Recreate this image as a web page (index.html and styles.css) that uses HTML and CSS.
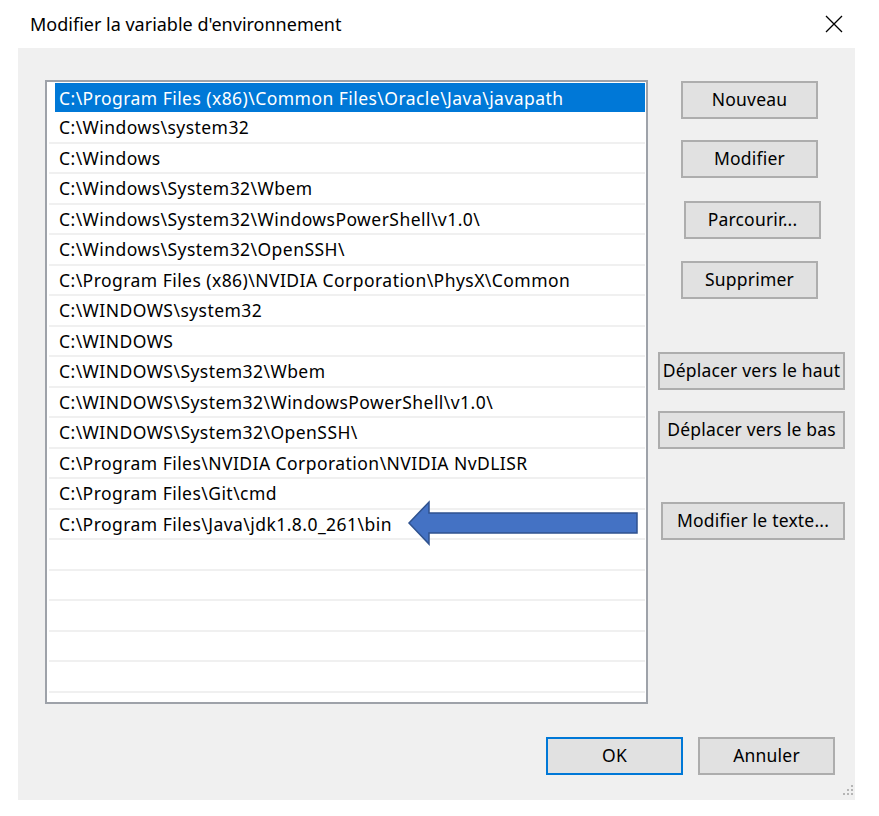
FILE: index.html
```html
<!DOCTYPE html>
<html lang="fr">
<head>
<meta charset="utf-8">
<title>Modifier la variable d'environnement</title>
<link rel="stylesheet" href="styles.css">
</head>
<body>
<div class="titlebar">
  <span class="title">Modifier la variable d'environnement</span>
  <svg class="close" width="18" height="18" viewBox="0 0 18 18"><path d="M1 1 L17 17 M17 1 L1 17" stroke="#000" stroke-width="1.3" fill="none"/></svg>
</div>
<div class="panel">
  <div class="main">
    <div class="list">
      <div class="row sel"><span>C:\Program Files (x86)\Common Files\Oracle\Java\javapath</span></div>
      <div class="row"><span>C:\Windows\system32</span></div>
      <div class="row"><span>C:\Windows</span></div>
      <div class="row"><span>C:\Windows\System32\Wbem</span></div>
      <div class="row"><span>C:\Windows\System32\WindowsPowerShell\v1.0\</span></div>
      <div class="row"><span>C:\Windows\System32\OpenSSH\</span></div>
      <div class="row"><span>C:\Program Files (x86)\NVIDIA Corporation\PhysX\Common</span></div>
      <div class="row"><span>C:\WINDOWS\system32</span></div>
      <div class="row"><span>C:\WINDOWS</span></div>
      <div class="row"><span>C:\WINDOWS\System32\Wbem</span></div>
      <div class="row"><span>C:\WINDOWS\System32\WindowsPowerShell\v1.0\</span></div>
      <div class="row"><span>C:\WINDOWS\System32\OpenSSH\</span></div>
      <div class="row"><span>C:\Program Files\NVIDIA Corporation\NVIDIA NvDLISR</span></div>
      <div class="row"><span>C:\Program Files\Git\cmd</span></div>
      <div class="row"><span>C:\Program Files\Java\jdk1.8.0_261\bin</span></div>
      <div class="row"><span></span></div>
      <div class="row"><span></span></div>
      <div class="row"><span></span></div>
      <div class="row"><span></span></div>
      <div class="row"><span></span></div>
      <svg class="arrow" width="234" height="48" viewBox="0 0 234 48"><polygon points="2,23 22,2 22,13 230,13 230,33 22,33 22,44" fill="#4472c4" stroke="#2f528f" stroke-width="1.5" stroke-linejoin="miter"/></svg>
    </div>
    <div class="buttons">
      <button class="btn b-nouveau">Nouveau</button>
      <button class="btn b-modifier">Modifier</button>
      <button class="btn b-parcourir">Parcourir...</button>
      <button class="btn b-supprimer">Supprimer</button>
      <button class="btn b-haut">Déplacer vers le haut</button>
      <button class="btn b-bas">Déplacer vers le bas</button>
      <button class="btn b-texte">Modifier le texte...</button>
    </div>
  </div>
  <div class="footer">
    <button class="btn b-ok">OK</button>
    <button class="btn b-annuler">Annuler</button>
  </div>
  <svg class="grip" width="12" height="12" viewBox="0 0 12 12">
    <rect x="10" y="0" width="2" height="2" fill="#b5b5b5"/>
    <rect x="6" y="4" width="2" height="2" fill="#b5b5b5"/>
    <rect x="10" y="4" width="2" height="2" fill="#b5b5b5"/>
    <rect x="2" y="8" width="2" height="2" fill="#b5b5b5"/>
    <rect x="6" y="8" width="2" height="2" fill="#b5b5b5"/>
    <rect x="10" y="8" width="2" height="2" fill="#b5b5b5"/>
  </svg>
</div>
</body>
</html>
```
FILE: styles.css
```css
html, body {
  margin: 0;
  padding: 0;
  background: #ffffff;
}
body {
  width: 879px;
  height: 816px;
  font-family: "Noto Sans", "Open Sans", sans-serif;
  color: #000;
}
.titlebar {
  height: 48px;
  display: flex;
  align-items: center;
  justify-content: space-between;
  padding: 0 36px 0 30px;
}
.title {
  font-size: 18px;
  color: #000;
}
.close {
  display: block;
}
.panel {
  position: relative;
  margin: 0 24px 0 18px;
  height: 752px;
  background: #f0f0f0;
  display: flex;
  flex-direction: column;
}
.main {
  display: flex;
  padding: 32px 0 0 27px;
}
.list {
  position: relative;
  width: 603px;
  height: 624px;
  box-sizing: border-box;
  border: 2px solid #9ea2a9;
  background: #fff;
  padding: 1px 1px 0 2px;
  overflow: hidden;
}
.row {
  height: 30.5px;
  box-sizing: border-box;
  border-bottom: 2px solid #f0f0f0;
  padding-left: 6px;
  display: flex;
  font-size: 17.5px;
  letter-spacing: 0.45px;
}
.row span {
  flex: 1;
  display: flex;
  align-items: center;
  padding-left: 4px;
  white-space: nowrap;
}
.row.sel {
  height: 30px;
  border-bottom: 1px solid #fff;
}
.row.sel span {
  background: #0078d7;
  color: #fff;
}
.arrow {
  position: absolute;
  left: 360px;
  top: 418px;
}
.buttons {
  display: flex;
  flex-direction: column;
  align-items: flex-start;
  margin-left: 10px;
  width: 187px;
  padding-top: 1px;
}
.btn {
  height: 38px;
  box-sizing: border-box;
  border: 2px solid #adadad;
  background: #e1e1e1;
  font-family: "Noto Sans", "Open Sans", sans-serif;
  font-size: 17.5px;
  letter-spacing: 0.2px;
  color: #000;
  padding: 0 0 2px 0;
  margin: 0;
}
.b-nouveau { margin-left: 23px; width: 137px; }
.b-modifier { margin-left: 23px; margin-top: 21px; width: 137px; }
.b-parcourir { margin-left: 26px; margin-top: 23px; width: 137px; }
.b-supprimer { margin-left: 23px; margin-top: 22px; width: 137px; }
.b-haut { margin-top: 53px; width: 187px; }
.b-bas { margin-top: 21px; width: 187px; }
.b-texte { margin-left: 3px; margin-top: 53px; width: 184px; }
.footer {
  display: flex;
  justify-content: flex-end;
  gap: 15px;
  padding: 33px 20px 0 0;
}
.b-ok {
  width: 137px;
  border-color: #0078d7;
}
.b-annuler {
  width: 137px;
}
.grip {
  position: absolute;
  right: 2px;
  bottom: 3px;
}
```
